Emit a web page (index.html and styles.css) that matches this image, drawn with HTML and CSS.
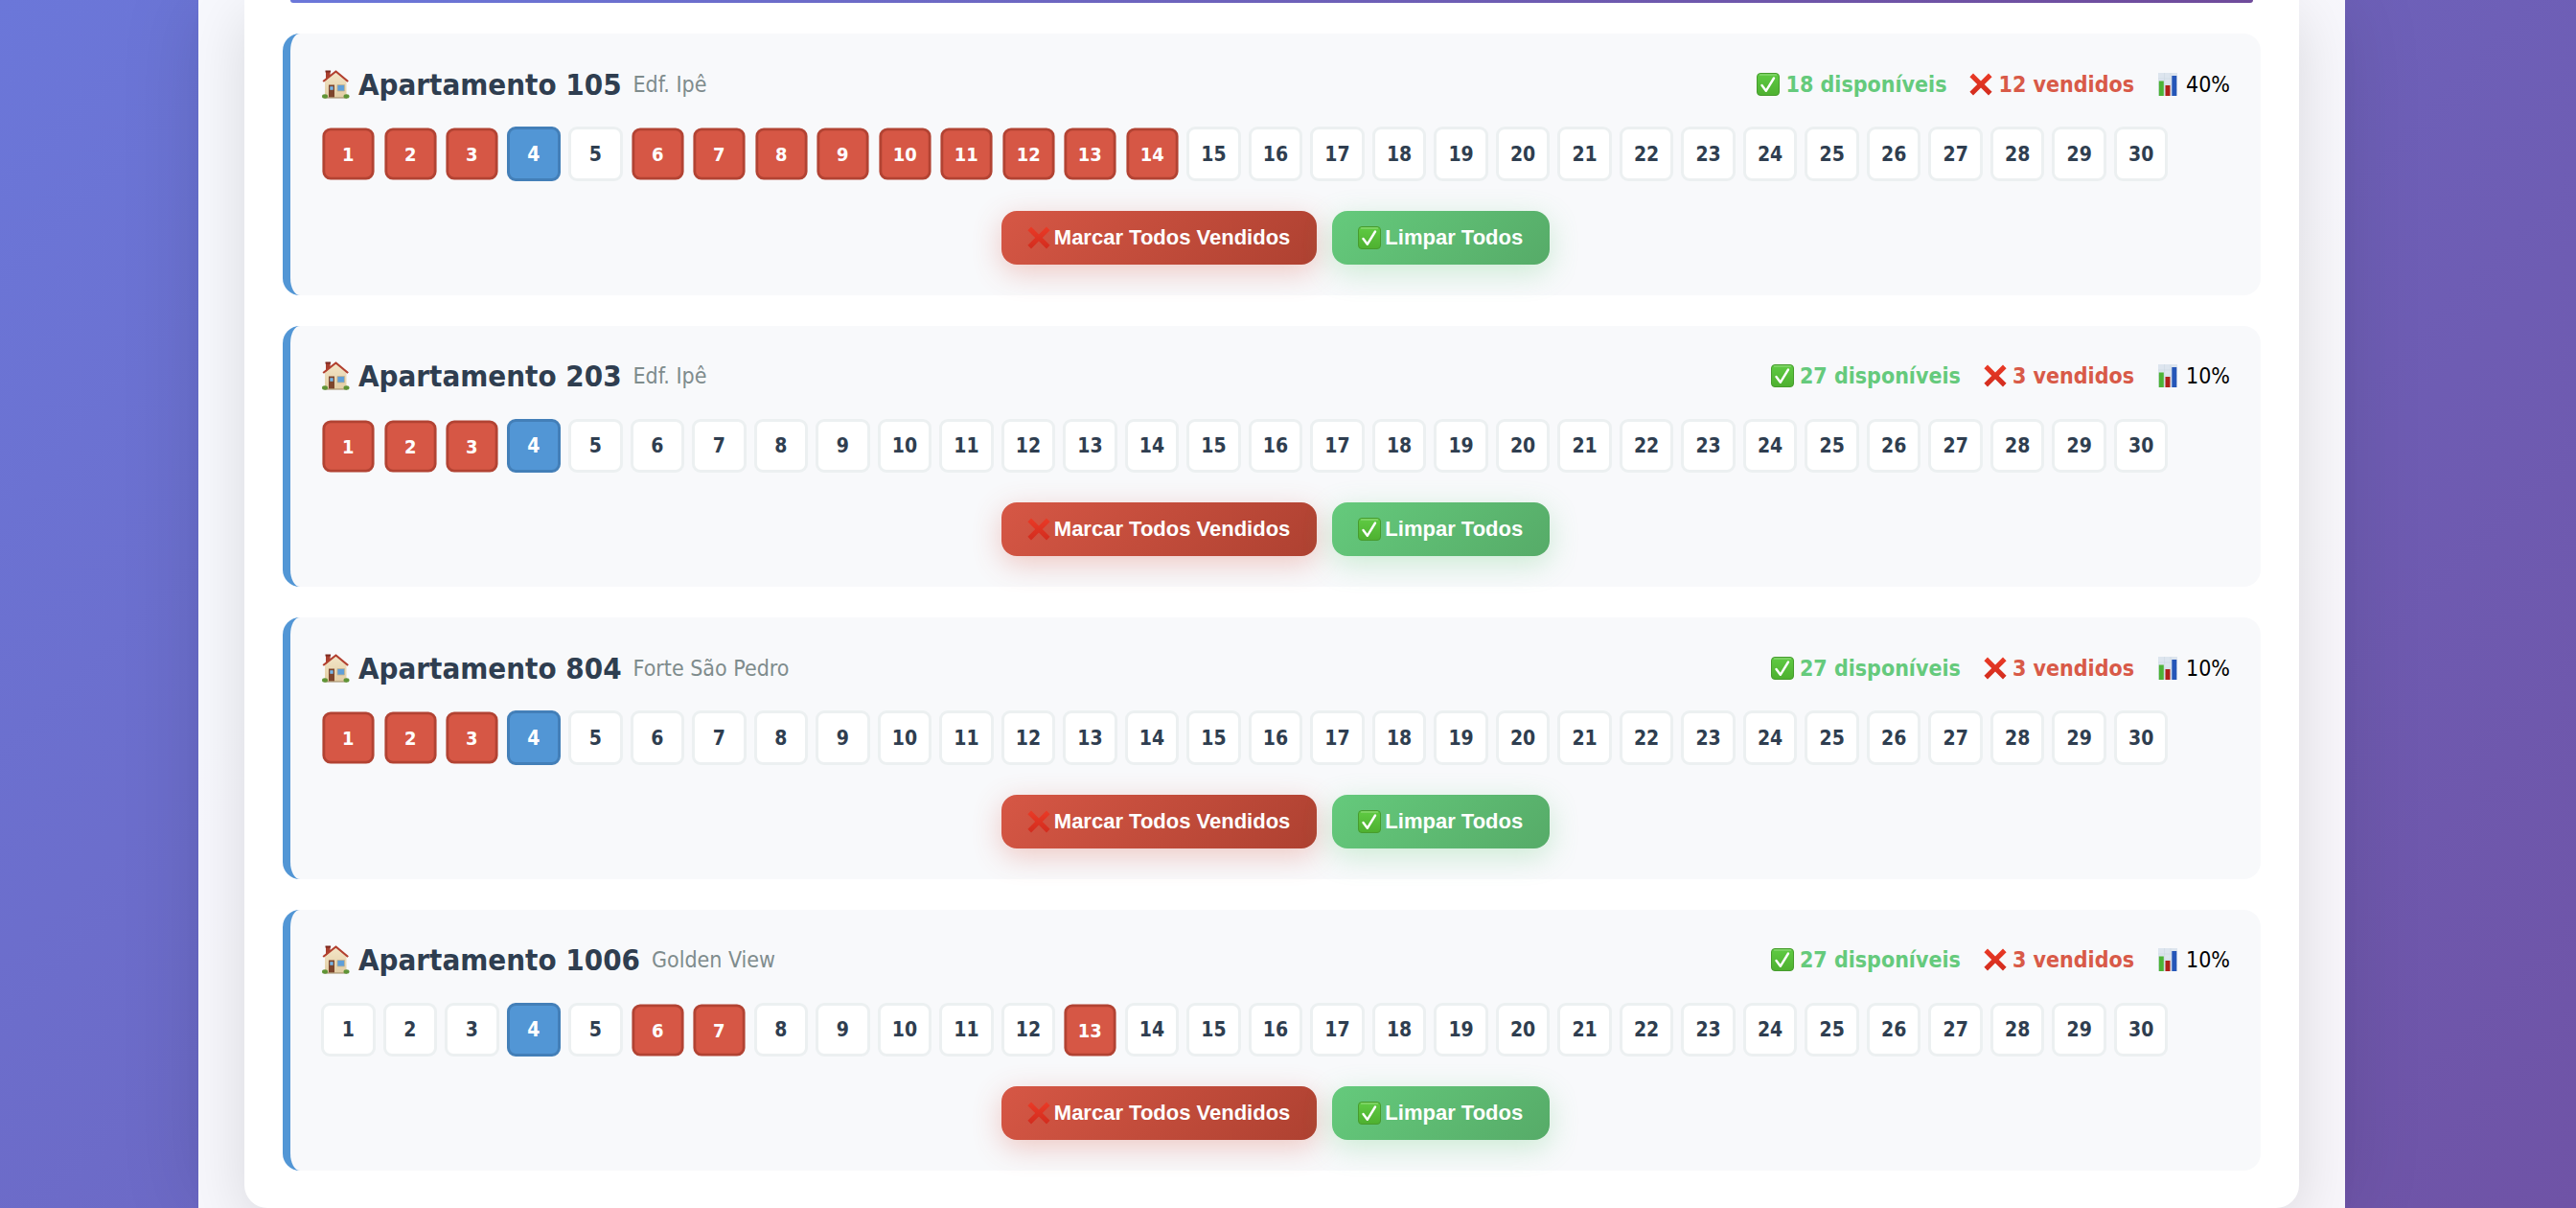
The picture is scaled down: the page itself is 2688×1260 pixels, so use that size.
FILE: index.html
```html
<!DOCTYPE html>
<html lang="pt-BR">
<head>
<meta charset="utf-8">
<meta name="viewport" content="width=device-width, initial-scale=1">
<title>Apartamentos</title>
<link rel="stylesheet" href="styles.css">
</head>
<body>
<svg class="sprite" aria-hidden="true">
  <defs>
    <linearGradient id="g-check" x1="0" y1="0" x2="0" y2="1"><stop offset="0" stop-color="#5fcb43"/><stop offset="1" stop-color="#4eb030"/></linearGradient>
    <linearGradient id="g-cross" x1="0" y1="0" x2="0" y2="1"><stop offset="0" stop-color="#ea3a26"/><stop offset="1" stop-color="#d22c1e"/></linearGradient>
    <linearGradient id="g-wall" x1="0" y1="0" x2="0" y2="1"><stop offset="0" stop-color="#f3e6c8"/><stop offset="1" stop-color="#e2cda4"/></linearGradient>
    <symbol id="i-check" viewBox="0 0 24 24">
      <rect x="0.5" y="0.5" width="23" height="23" rx="3.500" fill="url(#g-check)" stroke="#479c2e"/>
      <path d="M3.500 2h17" stroke="#97dc82" stroke-width="1.200" stroke-linecap="round"/>
      <path d="M5.500 13 9.800 18.800 18 5.500" fill="none" stroke="#fff" stroke-width="2.400" stroke-linecap="round" stroke-linejoin="round"/>
    </symbol>
    <symbol id="i-cross" viewBox="0 0 24 24">
      <path d="M4 0.6 12 8.400 20 0.6 23.600 4.200 15.800 12 23.600 19.800 20 23.400 12 15.600 4 23.400 0.4 19.800 8.200 12 0.4 4.200Z" fill="url(#g-cross)"/>
    </symbol>
    <symbol id="i-chart" viewBox="0 0 24 24">
      <path d="M1 0h20v24H1z" fill="#dde5ee"/>
      <path d="M1 6h20M1 12h20M1 18h20M7.500 0v24M14 0v24" stroke="#ccd6e2" stroke-width="0.6"/>
      <path d="M1.800 8.500h5v15.500h-5z" fill="#4cb336"/>
      <path d="M8.500 13h5v11h-5z" fill="#b0221b"/>
      <path d="M15.300 3h5v21h-5z" fill="#2556b8"/>
    </symbol>
    <symbol id="i-house" viewBox="0 0 30 30">
      <path d="M5 1.500h4.600v8L5 12z" fill="#a8402f"/>
      <path d="M4.500 0.500h5.600v2H4.500z" fill="#7c2a20"/>
      <path d="M4 11.500 15.500 2 26.500 11.500V29H4z" fill="url(#g-wall)"/>
      <path d="M2.200 12 15.500 1.500 28.200 12" fill="none" stroke="#b2402f" stroke-width="2.200" stroke-linejoin="round"/>
      <path d="M8 15.500h6V28.500H8z" fill="#7d452c"/>
      <path d="M9.300 17.200h3.400v3.600H9.300z" fill="#76b6e8"/>
      <path d="M17 15.500h7.500v6.500H17z" fill="#5f9fd9" stroke="#c3b38e" stroke-width="0.800"/>
      <path d="M3.500 29h23.500" stroke="#9a8763"/>
      <ellipse cx="4" cy="27.500" rx="3" ry="2.200" fill="#5f9436"/>
      <ellipse cx="26.500" cy="27.500" rx="3" ry="2.200" fill="#5f9436"/>
    </symbol>
  </defs>
</svg>
<main class="container">
  <section class="panel">
    <div class="banner"></div>
    <div class="list" id="list"></div>
  </section>
</main>
<script src="app.js"></script>
</body>
</html>
```
FILE: styles.css
```css
* {
  box-sizing: border-box;
  margin: 0;
  padding: 0;
}

body {
  min-height: 100vh;
  padding-right: 34px;
  overflow-x: hidden;
  font-family: Tahoma, "DejaVu Sans Condensed", "DejaVu Sans", sans-serif;
  font-size: 23px;
  color: #000;
  background: linear-gradient(135deg, #6b77d9 0%, #6f53a6 100%);
}

.sprite {
  position: absolute;
  width: 0;
  height: 0;
}

.container {
  max-width: 2240px;
  min-height: 100vh;
  margin: 0 auto;
  padding: 0 48px;
  background: rgba(255, 255, 255, 0.95);
  box-shadow: 0 0 80px rgba(0, 0, 0, 0.12);
}

.panel {
  padding: 0 40px 39px;
  border-radius: 0 0 24px 24px;
  background: #fff;
  box-shadow: 0 16px 64px rgba(0, 0, 0, 0.13);
}

.banner {
  height: 3px;
  margin: 0 8px 32px;
  border-radius: 0 0 3px 3px;
  background: linear-gradient(135deg, #6b77d9 0%, #6f4b9b 100%);
}

.list {
  display: grid;
  gap: 32px;
}

.card {
  padding: 32px;
  border-left: 8px solid #5296d5;
  border-radius: 18px;
  background: #f8f9fb;
}

.card-head {
  display: flex;
  justify-content: space-between;
  align-items: center;
  height: 41px;
  margin-bottom: 24px;
}

.title {
  display: flex;
  align-items: center;
  gap: 12px;
}

.title h3 {
  display: flex;
  align-items: center;
  gap: 9px;
  font-size: 31px;
  line-height: 40px;
  color: #2f3e50;
}

.building {
  color: #7f8c8d;
}

.stats {
  display: flex;
  gap: 24px;
}

.stat {
  display: flex;
  align-items: center;
  gap: 6px;
}

.free {
  font-weight: bold;
  color: #65ca7c;
}

.taken {
  font-weight: bold;
  color: #d85a48;
}

.icon {
  width: 24px;
  height: 24px;
}

.icon-house {
  width: 30px;
  height: 30px;
}

.days {
  display: grid;
  grid-template-columns: repeat(auto-fill, minmax(56px, 1fr));
  gap: 8px;
  margin-bottom: 31px;
}

.day {
  aspect-ratio: 1;
  padding-top: 1px;
  border: 3px solid #ecf0f1;
  border-radius: 9px;
  font: bold 21px Tahoma, "DejaVu Sans Condensed", "DejaVu Sans", sans-serif;
  color: #2f3e50;
  background: #fff;
  cursor: pointer;
}

.day.sold {
  border-color: #b24333;
  color: #fff;
  background: #d65745;
  transform: scale(0.95);
}

.day.today {
  border-color: #437fb8;
  color: #fff;
  background: #5296d5;
}

.actions {
  display: flex;
  justify-content: center;
  gap: 16px;
}

.btn {
  display: flex;
  align-items: center;
  gap: 4px;
  height: 56px;
  padding: 0 28px 0 27px;
  border: 0;
  border-radius: 16px;
  font: bold 22px "Liberation Sans", Arial, sans-serif;
  color: #fff;
  cursor: pointer;
}

.btn-sell {
  background: linear-gradient(135deg, #d65745, #ae4131);
  box-shadow: 0 8px 30px rgba(214, 87, 69, 0.3);
}

.btn-clear {
  background: linear-gradient(135deg, #65ca7c, #56ab68);
  box-shadow: 0 8px 30px rgba(101, 202, 124, 0.3);
}
```
FILE: app.js
```js
const TOTAL_DAYS = 30;
const TODAY = 4;

const apartments = [
  { number: 105, building: "Edf. Ipê", sold: [1, 2, 3, 6, 7, 8, 9, 10, 11, 12, 13, 14] },
  { number: 203, building: "Edf. Ipê", sold: [1, 2, 3] },
  { number: 804, building: "Forte São Pedro", sold: [1, 2, 3] },
  { number: 1006, building: "Golden View", sold: [6, 7, 13] },
];

const icon = (name, extra = "") =>
  `<svg class="icon ${extra}" aria-hidden="true"><use href="#i-${name}"/></svg>`;

function dayButton(day, sold) {
  const state = sold.includes(day) ? "sold" : day === TODAY ? "today" : "";
  return `<button type="button" class="day ${state}">${day}</button>`;
}

function card({ number, building, sold }) {
  const days = Array.from({ length: TOTAL_DAYS }, (_, i) => dayButton(i + 1, sold)).join("");
  return `
    <article class="card">
      <header class="card-head">
        <div class="title">
          <h3>${icon("house", "icon-house")}Apartamento ${number}</h3>
          <span class="building">${building}</span>
        </div>
        <div class="stats">
          <span class="stat free">${icon("check")}${TOTAL_DAYS - sold.length} disponíveis</span>
          <span class="stat taken">${icon("cross")}${sold.length} vendidos</span>
          <span class="stat">${icon("chart")}${Math.round((sold.length / TOTAL_DAYS) * 100)}%</span>
        </div>
      </header>
      <div class="days">${days}</div>
      <div class="actions">
        <button type="button" class="btn btn-sell">${icon("cross")}Marcar Todos Vendidos</button>
        <button type="button" class="btn btn-clear">${icon("check")}Limpar Todos</button>
      </div>
    </article>`;
}

document.getElementById("list").innerHTML = apartments.map(card).join("");
```
